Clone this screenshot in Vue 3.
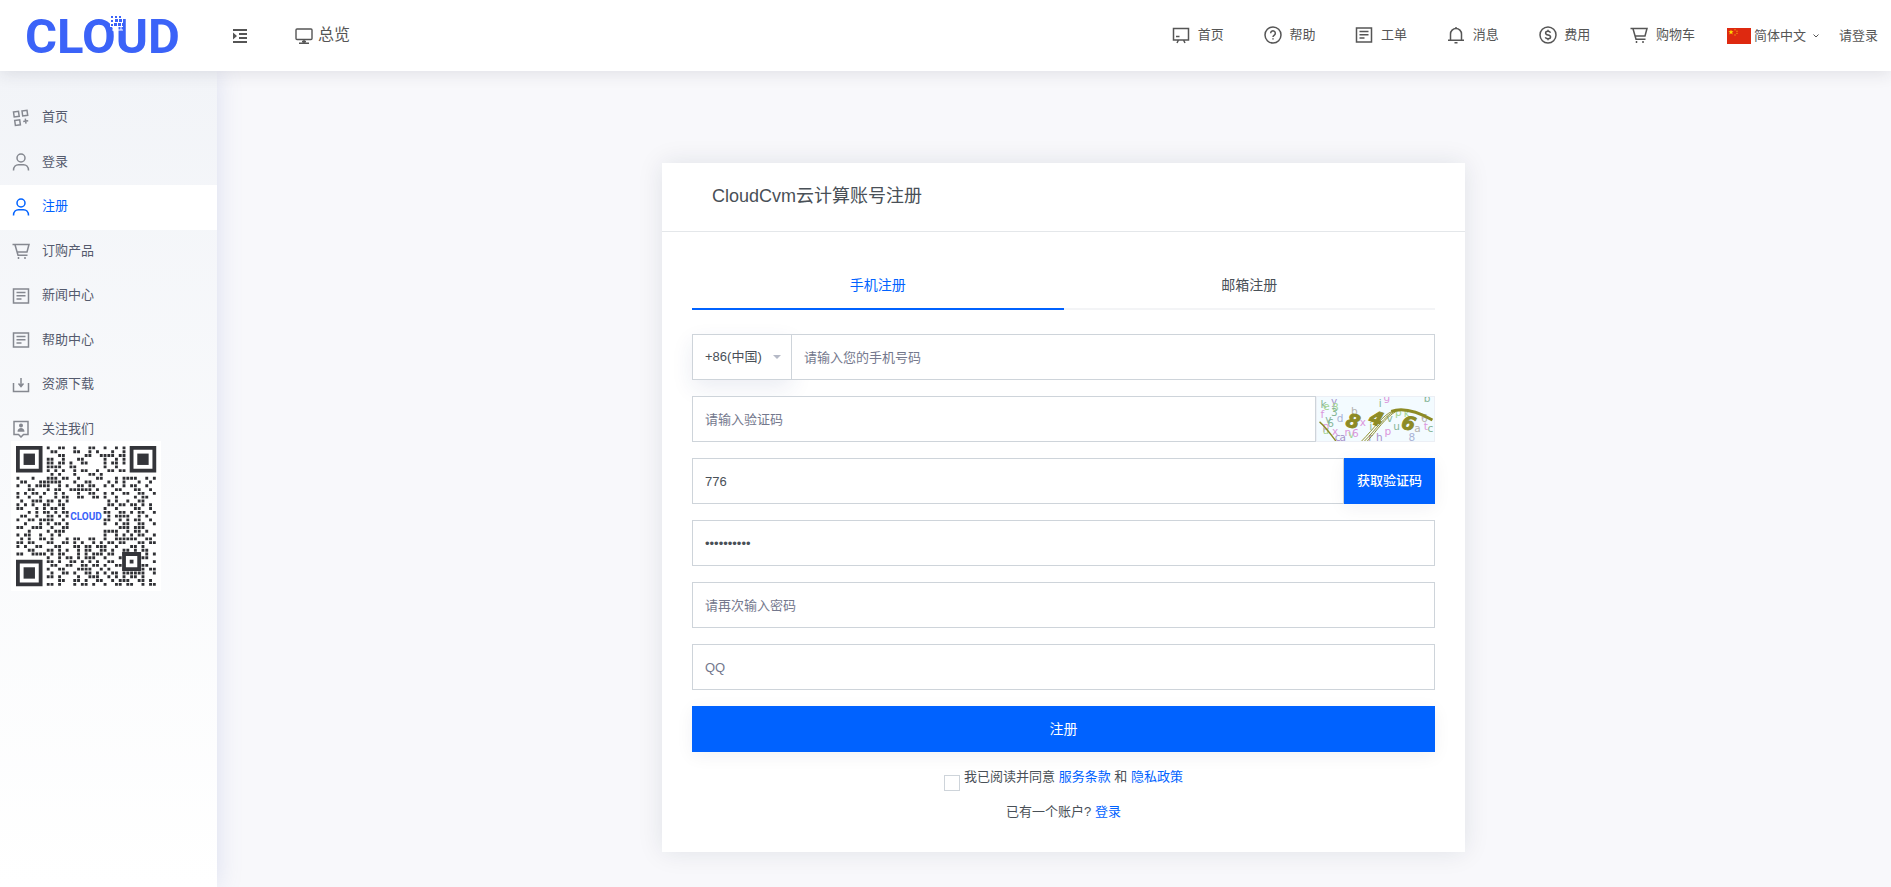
<script setup>
import { ref, computed, h } from 'vue'

const paths = {
  board: 'M1.500 2.500h15v11.500h-15zM4 10.500h3.500M6.500 14l-1.500 3M11.500 14l1.500 3',
  help: 'M9 1a8 8 0 1 0 0 16a8 8 0 1 0 0-16M6.700 7.200a2.300 2.300 0 1 1 3.600 1.900c-.9.600-1.300 1-1.300 2M9 12.200v1.400',
  list: 'M1.500 2h15v14h-15zM4.500 5.500h9M4.500 8.700h9M4.500 12h5',
  bell: 'M1 14.200h16M3.500 14V8a5.500 5.500 0 0 1 11 0v6M9 1v2M7.500 16.700h3',
  money: 'M9 1a8 8 0 1 0 0 16a8 8 0 1 0 0-16M11.500 6.700c-.4-1-1.400-1.400-2.500-1.400c-3.200 0-3.200 3.300 0 3.700c3.400.400 3.400 3.800 0 3.800c-1.300 0-2.300-.5-2.700-1.600M9 3.800v1.500M9 12.700v1.500',
  cart: 'M.5 2.500h16.500l-2 7.500H5.500M3 2.700l3 10.500h9.500M6.500 15v2M13 15v2',
  user: 'M9 1a4 4 0 1 0 0 8a4 4 0 1 0 0-8M1.500 17.500c0-4 2.500-5.800 5-5.800h5c2.500 0 5 1.800 5 5.800',
  grid: 'M1.500 3l5-.7.700 5-5 .7zM10 2l5-.7.700 5-5 .7zM2.700 11.500l5-.7.700 5-5 .7zM13.300 9.700l.7 5M11.200 12.500l5-.7',
  download: 'M1.500 7v8.500h15V7M9 2v8M6.500 7.500L9 10.500l2.500-3',
  contact: 'M2 1.500h14v13h-4.500L9 17l-2.500-2.500H2z',
}

const Icon = (props) =>
  h('svg', { viewBox: '0 0 18 18', 'aria-hidden': 'true', fill: 'none', stroke: 'currentColor', 'stroke-width': 1.5 }, [
    h('path', { d: paths[props.name] }),
    props.name === 'contact'
      ? h('path', { d: 'M9 3.500a2 2 0 1 0 0 4a2 2 0 1 0 0-4M5.500 11.700c0-5 7-5 7 0z', fill: 'currentColor', stroke: 'none' })
      : null,
  ])
Icon.props = ['name']

const topNav = [
  { icon: 'board', label: '首页' },
  { icon: 'help', label: '帮助' },
  { icon: 'list', label: '工单' },
  { icon: 'bell', label: '消息' },
  { icon: 'money', label: '费用' },
  { icon: 'cart', label: '购物车' },
]

const sideNav = [
  { icon: 'grid', label: '首页' },
  { icon: 'user', label: '登录' },
  { icon: 'user', label: '注册', active: true },
  { icon: 'cart', label: '订购产品' },
  { icon: 'list', label: '新闻中心' },
  { icon: 'list', label: '帮助中心' },
  { icon: 'download', label: '资源下载' },
  { icon: 'contact', label: '关注我们' },
]

const qrRows = [
  '........#..##..#...##..#..#.#........',
  '.........##....##..#.#...#..#........',
  '...........##.....##..####.##........',
  '........##..#...##.....#..#.#........',
  '........##.##.#..##....#.##.#........',
  '........####..##.......#..#..........',
  '........#.#.#..#.##..#..##.##........',
  '.........#.#...#...##.#..............',
  '#...#...###.##..#....##...#.####..#.#',
  '.##...######...#..##....#.#.#...#..#.',
  '#..#.####..#.#..##.##..#.#..#.##..#..',
  '...##...#.##..######.#....##...##..#.',
  '#.#.##.#..#.#...#..##..#.#..##..##..#',
  '#..#..#...#.##..##..##.#..#....#.##..',
  '.#..###.##.#.#..........#.#..#..##...',
  '#.#.#..##..##...........##.##.##.#.#.',
  '##...#.#.##.#..........#..#....##..#.',
  '...#.#.##.#.##.........##..##.#.##..#',
  '.##..#..##.#.#..........#.####..#.#..',
  '#..##.####..#..........##..#.#.##..#.',
  '..#...#.#.##.#.........#..#.##..##..#',
  '##..###..#..##.............###.###...',
  '...#....#.###..........####..#.##.#..',
  '#.##..#..#.#...........#..#.#.#.##..#',
  '.#.#..##.#...#.##..##..#..######..##.',
  '##.##...##..##.#.#..#.#.##.##...##.##',
  '#.#..##...##...##.##.###..#...##.#...',
  '...##...##.#.#..#.##..##.#..##.#.##..',
  '##..####.#.##...#.#.###.##..####..#.#',
  '........#..#.##.#.###..#...#.....##..',
  '........##.#..##.#.#.#..##..........#',
  '.........##..##..##.##.#..##.....##..',
  '........#..##...####..#.#...#....#.##',
  '.........#..##.#..##.#.#.##.######..#',
  '........##.#....#..###..#.#.#.##.#...',
  '...........##..##.#..##..#.###..##.#.',
  '........##.#...#.##.#..#..##.##..#.##',
]
const qrPath = computed(() =>
  qrRows
    .map((row, y) => [...row].map((c, x) => (c === '#' ? `M${x + 0.12} ${y + 0.12}h.76v.76h-.76z` : '')).join(''))
    .join(''),
)
const finders = [[0, 0], [30, 0], [0, 30]]

const noise = [
  ['k', 2, 12, 'green'], ['y', 13, 8, 'violet'], ['e', 5, 14, 'lime'], ['8', 14, 15, 'lime'], ['3', 13, 20, 'green'],
  ['b', 34, 19, 'grey'], ['i', 63, 10, 'green'], ['g', 68, 4, 'pink'], ['b', 110, 5, 'green'], ['f', 2, 22, 'pink'],
  ['d', 19, 26, 'blue'], ['v', 7, 27, 'green'], ['6', 9, 31, 'green'], ['x', 43, 30, 'pink'], ['p', 4, 35, 'pink'],
  ['u', 4, 39, 'lime'], ['x', 14, 40, 'pink'], ['n', 27, 41, 'pink'], ['v', 31, 43, 'lime'], ['6', 35, 42, 'pink'],
  ['c', 17, 46, 'violet'], ['a', 22, 46, 'violet'], ['i', 53, 34, 'green'], ['r', 52, 46, 'violet'], ['h', 60, 46, 'violet'],
  ['p', 69, 40, 'pink'], ['v', 71, 26, 'green'], ['p', 80, 20, 'lime'], ['k', 89, 21, 'lime'], ['u', 78, 34, 'green'],
  ['6', 107, 26, 'grey'], ['t', 110, 34, 'pink'], ['c', 114, 37, 'green'], ['a', 100, 37, 'grey'], ['8', 94, 46, 'blue'],
]

const country = ref('86')
const phone = ref('')
const captcha = ref('')
const code = ref('776')
const password = ref('0123456789')
const repeat = ref('')
const qq = ref('')
const agreed = ref(false)
</script>

<template>
  <div class="page">
    <header class="topbar">
      <a href="#" class="brand" aria-label="CLOUD">
        <svg viewBox="0 0 160 60" width="160" height="60">
          <text x="0" y="47" class="brand-text">CLOUD</text>
          <rect x="85" y="11" width="13" height="10" fill="#fff" />
          <path d="M86 10h2v2h-2zM90 10h2v2h-2zM94 10h2v2h-2zM86 14h2v2h-2zM90 13h3v3h-3zM94 13h3v3h-3zM86 18h2v2h-2zM89 17h3v3h-3zM93 17h3v3h-3zM97 17h2v3h-2z" fill="#3b63f8" />
          <path d="M92 21v5M96 21v3M87 24h11" stroke="#fff" fill="none" />
        </svg>
      </a>
      <button type="button" class="toggle" aria-label="菜单">
        <svg viewBox="0 0 14 14" width="14" height="14" fill="currentColor">
          <path d="M0 0h14v2H0zM6 4h8v2H6zM6 8h8v2H6zM0 12h14v2H0zM0 3.500l4 3.500-4 3.500z" />
        </svg>
      </button>
      <a href="#" class="overview">
        <svg viewBox="0 0 18 16" width="18" height="16" fill="none" stroke="currentColor" stroke-width="1.4">
          <rect x="1" y="1" width="16" height="10.500" rx="1" />
          <path d="M9 11.500v3M4 15.200h10M7 13.500h4" />
        </svg>
        <span>总览</span>
      </a>
      <nav class="topnav">
        <a v-for="item in topNav" :key="item.label" href="#"><Icon :name="item.icon" class="icon" /> {{ item.label }}</a>
      </nav>
      <button type="button" class="lang">
        <svg viewBox="0 0 24 16" width="24" height="16">
          <rect width="24" height="16" fill="#de2910" />
          <path d="M4 1.500l.7 1.800h1.900l-1.500 1.200.6 1.900L4 5.300 2.300 6.400l.6-1.900-1.500-1.200h1.900z" fill="#ffde00" />
          <g fill="#f0a010">
            <circle cx="8" cy="1.700" r=".7" /><circle cx="10" cy="3.200" r=".7" /><circle cx="10" cy="5.400" r=".7" /><circle cx="8" cy="7" r=".7" />
          </g>
        </svg>
        <span>简体中文</span>
        <svg class="chevron" viewBox="0 0 6 4" width="6" height="4" fill="none" stroke="currentColor"><path d="M.5.5L3 3 5.500.5" /></svg>
      </button>
      <a href="#" class="signin">请登录</a>
    </header>

    <div class="layout">
      <aside class="sidebar">
        <nav>
          <a v-for="item in sideNav" :key="item.label" href="#" class="side-link" :class="{ active: item.active }">
            <Icon :name="item.icon" class="icon" />
            <span>{{ item.label }}</span>
          </a>
        </nav>
        <svg class="qr" viewBox="0 0 150 150" width="150" height="150" role="img" aria-label="二维码">
          <rect width="150" height="150" fill="#fff" />
          <g transform="translate(5 5) scale(3.79)">
            <path :d="qrPath" fill="#303135" />
            <g v-for="(f, i) in finders" :key="i" :transform="`translate(${f[0]} ${f[1]})`" fill="#34353a">
              <path d="M0 0h7v7H0zM1 1v5h5V1z" fill-rule="evenodd" />
              <path d="M2 2h3v3H2z" />
            </g>
            <path d="M28 28h5v5h-5zM29 29v3h3v-3z" fill-rule="evenodd" fill="#34353a" />
            <path d="M30 30h1v1h-1z" fill="#34353a" />
          </g>
          <text x="75" y="79" class="qr-text">CLOUD</text>
        </svg>
      </aside>

      <main class="content">
        <section class="card">
          <h1>CloudCvm云计算账号注册</h1>
          <form class="body" @submit.prevent>
            <div class="tabs" role="tablist">
              <button type="button" role="tab" aria-selected="true" class="tab active">手机注册</button>
              <button type="button" role="tab" aria-selected="false" class="tab">邮箱注册</button>
            </div>
            <div class="row">
              <div class="country">
                <select v-model="country" aria-label="国家区号">
                  <option value="86">+86(中国)</option>
                </select>
                <svg viewBox="0 0 8 4" width="8" height="4"><path d="M0 0h8L4 4z" fill="#b5b9c6" /></svg>
              </div>
              <input v-model="phone" class="field joined" type="tel" placeholder="请输入您的手机号码" aria-label="手机号码" />
            </div>
            <div class="row">
              <input v-model="captcha" class="field" type="text" placeholder="请输入验证码" aria-label="图形验证码" />
              <svg class="captcha" viewBox="0 0 119 46" width="119" height="46" role="img" aria-label="图形验证码图片">
                <text v-for="(n, i) in noise" :key="i" :x="n[1]" :y="n[2]" class="noise" :class="n[3]">{{ n[0] }}</text>
                <g fill="none" stroke="#8d8b25">
                  <path d="M45 46C58 33 67 19 77 15" stroke-width="1" />
                  <path d="M48 46C60 34 69 20 79 15" stroke-width="1" />
                  <path d="M51 46C62 34 69 22 81 15" stroke-width="1" />
                  <path d="M76 15C87 11 103 15 119 24" stroke-width="3" />
                  <path d="M1 26C7 31 12 38 18 46" stroke-width="1.400" />
                </g>
                <text x="29" y="33" class="digit" transform="rotate(18 38 26)">8</text>
                <text x="53" y="30" class="digit" transform="rotate(18 62 24)">4</text>
                <text x="87" y="35" class="digit" transform="rotate(18 96 28)">6</text>
              </svg>
            </div>
            <div class="row">
              <input v-model="code" class="field" type="text" aria-label="短信验证码" />
              <button type="button" class="send">获取验证码</button>
            </div>
            <div class="row"><input v-model="password" class="field" type="password" aria-label="密码" /></div>
            <div class="row"><input v-model="repeat" class="field" type="password" placeholder="请再次输入密码" aria-label="确认密码" /></div>
            <div class="row"><input v-model="qq" class="field" type="text" placeholder="QQ" aria-label="QQ" /></div>
            <button type="submit" class="submit">注册</button>
            <div class="agree">
              <input id="agree" v-model="agreed" type="checkbox" />
              <span><label for="agree">我已阅读并同意</label> <a href="#">服务条款</a> 和 <a href="#">隐私政策</a></span>
            </div>
            <p class="login">已有一个账户? <a href="#">登录</a></p>
          </form>
        </section>
      </main>
    </div>
  </div>
</template>

<style>
body {
  margin: 0;
  background: #f8f8fb;
}
</style>

<style scoped>
.page,
.page * {
  box-sizing: border-box;
}
.page {
  min-height: 100vh;
  display: flex;
  flex-direction: column;
  font-family: "Liberation Sans", "Noto Sans CJK SC", sans-serif;
  font-size: 13px;
  line-height: 1.5;
  color: #495057;
}
a {
  color: #0062ff;
  text-decoration: none;
}
button,
input,
select {
  font: inherit;
  color: inherit;
  margin: 0;
  border-radius: 0;
}
button {
  border: 0;
  padding: 0;
  background: none;
  cursor: pointer;
}
svg {
  flex: none;
}
.icon {
  width: 18px;
  height: 18px;
}

.topbar {
  position: relative;
  z-index: 2;
  height: 71px;
  padding: 0 13px 0 25px;
  display: flex;
  align-items: center;
  background: #fff;
  color: #555;
  box-shadow: 0 2px 16px rgba(40, 45, 60, 0.12);
}
.topbar a {
  color: inherit;
}
.brand {
  display: flex;
  width: 208px;
}
.brand-text {
  font: 700 49px Roboto, sans-serif;
  fill: #3b63f8;
}
.toggle {
  display: flex;
  margin-right: 48px;
}
.overview {
  display: flex;
  align-items: center;
  gap: 5px;
  font-size: 16px;
}
.overview span,
.side-link span {
  margin-bottom: 2px;
}
.topnav {
  display: flex;
  margin-left: auto;
  padding-bottom: 2px;
}
.topnav a {
  padding: 0 20px;
}
.topnav .icon {
  margin-right: 4px;
  vertical-align: -5px;
}
.lang {
  display: flex;
  align-items: center;
  gap: 3px;
  margin-left: 12px;
}
.chevron {
  margin-left: 4px;
}
.signin {
  margin-left: 20px;
}

.layout {
  flex: 1;
  display: flex;
}
.sidebar {
  width: 217px;
  flex: none;
  padding-top: 25px;
  background: linear-gradient(#f2f4f8, #fff);
  box-shadow: 0 0 24px rgba(90, 110, 190, 0.18);
}
.side-link {
  display: flex;
  align-items: center;
  gap: 12px;
  padding: 11px 12px 12px;
  color: #545a6d;
}
.side-link .icon {
  color: #858890;
}
.side-link.active {
  background: #fff;
}
.side-link.active,
.side-link.active .icon {
  color: #0062ff;
}
.side-link:last-child {
  padding-bottom: 1px;
}
.qr {
  display: block;
  margin-left: 11px;
}
.qr-text {
  font: 700 10px Roboto, sans-serif;
  fill: #3b63f8;
  text-anchor: middle;
}

.content {
  flex: 1;
  display: flex;
  justify-content: center;
  align-items: flex-start;
  padding: 92px 0 30px 19px;
}
.card {
  flex: 0 1 803px;
  background: #fff;
  box-shadow: 0 0 24px rgba(18, 38, 63, 0.1);
}
h1 {
  margin: 0;
  padding: 20px 50px 21px;
  border-bottom: 1px solid #e4e7ea;
  font-size: 18px;
  font-weight: 400;
  line-height: 27px;
}
.body {
  padding: 30px;
}
.tabs {
  display: flex;
  margin-bottom: 24px;
}
.tab {
  flex: 1;
  height: 48px;
  border-bottom: 2px solid #f3f4f6;
  font-size: 14px;
}
.tab.active {
  color: #0062ff;
  border-color: #0062ff;
}
.row {
  display: flex;
  margin-bottom: 16px;
}
.field {
  flex: 1;
  min-width: 0;
  height: 46px;
  padding: 0 12px;
  border: 1px solid #ced4da;
  background: #fff;
  outline: 0;
}
.field::placeholder {
  color: #74788d;
  opacity: 1;
}
.joined {
  border-left: 0;
}
.country {
  width: 100px;
  display: grid;
  align-items: center;
  box-shadow: 0 8px 22px rgba(30, 60, 120, 0.09);
}
.country > * {
  grid-area: 1 / 1;
}
.country select {
  width: 100%;
  height: 46px;
  padding: 0 12px;
  border: 1px solid #ced4da;
  background: #fff;
  appearance: none;
}
.country svg {
  justify-self: end;
  margin-right: 11px;
  pointer-events: none;
}
.captcha {
  background: #f3fbff;
  border: 1px solid #eceff5;
}
.noise {
  font: 11px "DejaVu Sans", sans-serif;
}
.green { fill: #86b597; }
.lime { fill: #a5d592; }
.violet { fill: #a692cb; }
.pink { fill: #dc97dc; }
.blue { fill: #a9b3d6; }
.grey { fill: #b4b2ae; }
.digit {
  font: italic 700 20px "DejaVu Sans", sans-serif;
  fill: #8d8b25;
  stroke: #8d8b25;
}
.send,
.submit {
  height: 46px;
  background: #0062ff;
  color: #fff;
  box-shadow: 0 4px 18px rgba(18, 38, 63, 0.06);
}
.send {
  padding: 0 13px;
  font-weight: 500;
}
.submit {
  display: block;
  width: 100%;
  font-size: 14px;
}
.agree {
  display: flex;
  justify-content: center;
  gap: 4px;
  margin: 15px 0 11px;
}
.agree input {
  appearance: none;
  width: 16px;
  height: 16px;
  margin-top: 8px;
  border: 1px solid #ced4da;
  background: #fff;
}
.agree input:checked {
  background: #0062ff;
}
.login {
  margin: 0;
  text-align: center;
}
</style>
